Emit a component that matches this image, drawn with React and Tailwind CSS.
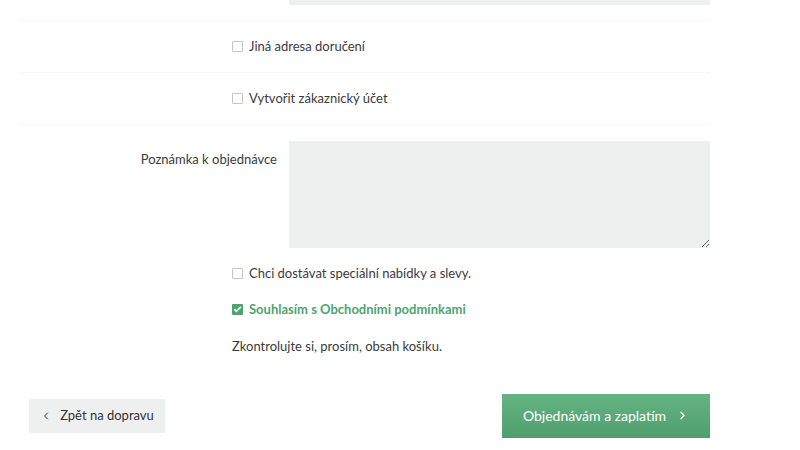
import { ChevronLeft, ChevronRight, Check } from "lucide-react";

function Box({ checked }) {
    return checked ? (
        <span className="flex size-[11px] items-center justify-center rounded-[1px] bg-[#4ea46f]"><Check className="size-[9px] text-white" strokeWidth={4} /></span>
    ) : (
        <span className="size-[11px] rounded-[1px] border border-[#c4c7c6] bg-white" />
    );
}

function CheckRow({ label }) {
    return (
        <div className="flex h-[52px] items-center border-b border-dotted border-[#f1f2f2] pl-[212px]">
            <label className="flex items-center gap-[6px] text-[13px] text-[#3b3b3b]"><Box /> {label}</label>
        </div>
    );
}

export default function App() {
    return (
        <div className="h-[450px] w-[800px] overflow-hidden bg-white font-['Lato',sans-serif]">
            <div className="ml-[20px] w-[690px]">
                <div className="border-b border-dotted border-[#f1f2f2] pb-[15px]">
                    <div className="ml-[269px] h-[5px] bg-[#eef0ef]" />
                </div>
                <CheckRow label="Jiná adresa doručení" />
                <CheckRow label="Vytvořit zákaznický účet" />

                <div className="mt-[16px] flex gap-[12px]">
                    <label className="w-[257px] pt-[9px] text-right text-[13px] text-[#3b3b3b]">Poznámka k objednávce</label>
                    <textarea className="h-[107px] flex-1 resize-y bg-[#eef0ef] outline-none" />
                </div>

                <div className="pl-[212px]">
                    <label className="mt-[16px] flex items-center gap-[6px] text-[13px] text-[#3b3b3b]"><Box /> Chci dostávat speciální nabídky a slevy.</label>
                    <label className="mt-[16px] flex items-center gap-[6px] text-[13px] font-bold text-[#4ea46f]"><Box checked /> Souhlasím s Obchodními podmínkami</label>
                    <p className="mt-[18px] text-[13px] text-[#3b3b3b]">Zkontrolujte si, prosím, obsah košíku.</p>
                </div>

                <div className="mt-[37px] flex items-center justify-between">
                    <button className="ml-[9px] flex h-[34px] w-[136px] items-center justify-center gap-[8px] bg-[#eef0ef] text-[13px] text-[#333]"><ChevronLeft className="size-[12px]" strokeWidth={2} /> Zpět na dopravu</button>
                    <button className="flex h-[44px] w-[208px] items-center justify-center gap-[10px] bg-gradient-to-b from-[#66b384] to-[#4f9f6e] text-[14px] text-white">Objednávám a zaplatím <ChevronRight className="size-[13px]" strokeWidth={2} /></button>
                </div>
            </div>
        </div>
    );
}
